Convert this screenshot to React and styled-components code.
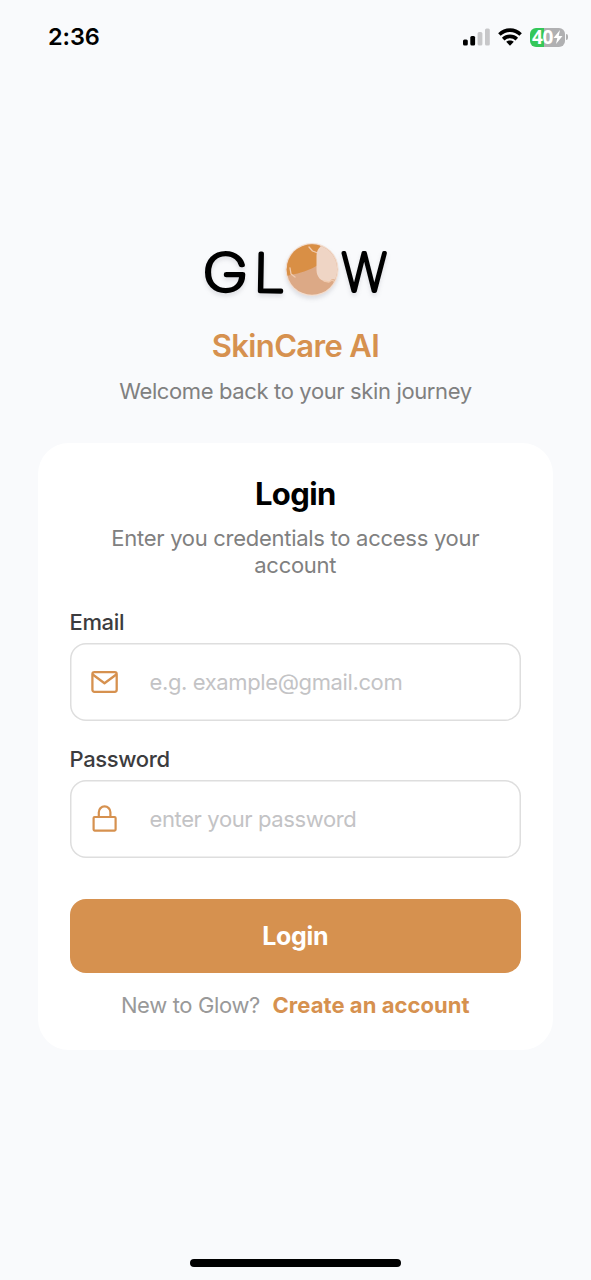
import React from "react";
import styled, { createGlobalStyle } from "styled-components";

const ACCENT = "#d6914f";

const GlobalStyle = createGlobalStyle`
  *, *::before, *::after { box-sizing: border-box; }
  body {
    margin: 0;
    background: #f9fafc;
    font-family: Inter, "Liberation Sans", sans-serif;
    -webkit-font-smoothing: antialiased;
  }
`;

const Screen = styled.div`
  width: 591px;
  height: 1280px;
  display: flex;
  flex-direction: column;
  align-items: center;
  background: #f9fafc;
  overflow: hidden;
`;

const StatusBar = styled.header`
  width: 100%;
  height: 74px;
  padding: 0 23px 0 48px;
  display: flex;
  align-items: center;
  justify-content: space-between;
`;

const Time = styled.span`
  font-size: 23.5px;
  font-weight: 600;
  line-height: 28px;
  letter-spacing: -0.1px;
  color: #000;
`;

const StatusIcons = styled.div`
  display: flex;
  align-items: center;
  gap: 8px;
`;

const Battery = styled.div`
  display: flex;
  align-items: center;
  gap: 1px;
`;

const BatteryBody = styled.div`
  width: 35px;
  height: 19px;
  border-radius: 6px;
  display: flex;
  align-items: center;
  justify-content: center;
  background: linear-gradient(90deg, #34c759 0 14px, #b0b0b2 14px);
  color: #fff;
  font-family: "Open Sans", Inter, sans-serif;
  font-size: 19px;
  font-weight: 700;
  line-height: 19px;
  letter-spacing: -0.3px;
`;

const BatteryTip = styled.div`
  width: 2px;
  height: 6px;
  border-radius: 0 2px 2px 0;
  background: #b0b0b2;
`;

const Brand = styled.section`
  margin-top: 162px;
  display: flex;
  flex-direction: column;
  align-items: center;
`;

const BrandName = styled.h1`
  margin: 17px 0 0;
  font-size: 31px;
  font-weight: 600;
  line-height: 38px;
  letter-spacing: -0.65px;
  color: ${ACCENT};
`;

const Tagline = styled.p`
  margin: 13px 0 0;
  font-size: 22px;
  line-height: 27px;
  letter-spacing: -0.37px;
  color: #808080;
  white-space: nowrap;
`;

const Card = styled.main`
  width: 515px;
  height: 607px;
  margin-top: 38px;
  padding: 32px 32px 0 31.5px;
  border-radius: 31px;
  background: #fff;
  display: flex;
  flex-direction: column;
`;

const CardTitle = styled.h2`
  margin: 0;
  text-align: center;
  font-size: 31px;
  font-weight: 700;
  line-height: 38px;
  letter-spacing: -0.65px;
  color: #000;
`;

const CardHint = styled.p`
  margin: 12px 0 0;
  text-align: center;
  font-size: 22px;
  line-height: 27px;
  letter-spacing: -0.28px;
  color: #808080;
`;

const Field = styled.label`
  display: flex;
  flex-direction: column;
  margin-top: ${({ $top }) => $top}px;
`;

const FieldLabel = styled.span`
  font-size: 22px;
  font-weight: 500;
  line-height: 27px;
  letter-spacing: -0.35px;
  color: #3c3c3e;
`;

const InputBox = styled.div`
  height: 78px;
  margin-top: 6.5px;
  padding: 1px 20px 0;
  display: flex;
  align-items: center;
  gap: 30px;
  border-radius: 16px;
  background: #fff;
  box-shadow: inset 0 0 0 1.5px #dedede;
`;

const Input = styled.input`
  flex: 1;
  min-width: 0;
  height: 40px;
  padding: 0;
  border: 0;
  outline: 0;
  background: transparent;
  font: 400 22px/27px Inter, "Liberation Sans", sans-serif;
  letter-spacing: -0.38px;
  color: #222;
  &::placeholder { color: #c3c3c5; opacity: 1; }
`;

const SubmitButton = styled.button`
  height: 74.5px;
  margin-top: 41px;
  padding: 0;
  border: 0;
  border-radius: 16px;
  background: ${ACCENT};
  color: #fff;
  font: 700 25px/30px Inter, "Liberation Sans", sans-serif;
  letter-spacing: -0.3px;
`;

const SignupRow = styled.div`
  margin-top: 19px;
  display: flex;
  justify-content: center;
  gap: 12.5px;
  font-size: 22px;
  line-height: 27px;
  letter-spacing: -0.35px;
  color: #999;
  white-space: nowrap;
`;

const SignupLink = styled.a`
  color: ${ACCENT};
  font-weight: 700;
  letter-spacing: 0.05px;
`;

const HomeIndicator = styled.div`
  width: 211px;
  height: 8px;
  margin: auto 0 13px;
  border-radius: 4px;
  background: #000;
`;

const Wordmark = styled.svg`
  display: block;
  filter: drop-shadow(0 3px 2px rgba(60, 60, 80, 0.14));
  text {
    font-family: Inter, sans-serif;
    font-weight: 100;
    stroke: #000;
    stroke-width: 4px;
    stroke-linejoin: round;
    stroke-linecap: round;
  }
`;

function GlowLogo() {
  return (
    <Wordmark width="190" height="74" viewBox="201 236 190 74" role="img" aria-label="Glow">
      <defs>
        <clipPath id="disc"><circle cx="312" cy="269.5" r="25.3" /></clipPath>
      </defs>
      <text transform="translate(203 291.2) scale(1.19 1)" fontSize="51">G</text>
      <text transform="translate(253.7 291.2) rotate(1) scale(1.05 1)" fontSize="52">L</text>
      <text transform="translate(341.8 291) scale(.93 1)" fontSize="52">W</text>
      <circle cx="312" cy="269.5" r="26.5" fill="#f2ddcf" />
      <g clipPath="url(#disc)">
        <rect x="285" y="242" width="55" height="55" fill="#dca986" />
        <path d="M285 242h35v21q-4 4-12 7-8 3-13 4-5 1-10 2.500z" fill="#d98f45" />
        <path d="M340 243v40l-3-3-5-1-3 3c-8 0-12.500-5-12.500-12v-14c0-6 3-10 9-12z" fill="#efd5c5" />
        <path d="M309 247l3.500 4 4 1.500M290 268l1 6 4 3M324 281l5 1 3-2 5 3" fill="none" stroke="#f0cbb0" strokeWidth="1.3" strokeLinecap="round" strokeLinejoin="round" />
      </g>
    </Wordmark>
  );
}

function SignalIcon() {
  return (
    <svg width="27" height="18" viewBox="0 0 27 18">
      <rect x="0" y="11.500" width="4.800" height="6" rx="1.500" />
      <rect x="7.300" y="8" width="4.800" height="9.500" rx="1.500" />
      <rect x="14.600" y="4" width="4.800" height="13.500" rx="1.500" fill="#c7c7c9" />
      <rect x="22" y="0.500" width="4.800" height="17" rx="1.500" fill="#c7c7c9" />
    </svg>
  );
}

function WifiIcon() {
  return (
    <svg width="24" height="18" viewBox="0 0 24 18">
      <g fill="none" stroke="#000" strokeWidth="3.6">
        <path d="M1.400 6.500C7.400.700 16.600.700 22.600 6.500" />
        <path d="M5.200 11.100C9 7.400 15 7.400 18.800 11.100" />
      </g>
      <path d="M8.200 13.800c2.200-1.900 5.400-1.900 7.600 0L12 17.700z" />
    </svg>
  );
}

function BoltIcon() {
  return (
    <svg width="10" height="14" viewBox="0 0 10 14">
      <path d="M7 0 .5 8h3.800L3 14l6.500-8H5.700z" fill="#fff" />
    </svg>
  );
}

function MailIcon() {
  return (
    <svg width="30" height="30" viewBox="0 0 30 30" fill="none" stroke={ACCENT} strokeWidth="2.3" strokeLinejoin="round">
      <rect x="2.400" y="5.200" width="24.300" height="19.600" rx="2" />
      <path d="M2.700 7.500 14.500 16.200 26.300 7.500" />
    </svg>
  );
}

function LockIcon() {
  return (
    <svg width="30" height="30" viewBox="0 0 30 30" fill="none" stroke={ACCENT} strokeWidth="2.2" strokeLinejoin="round">
      <rect x="3.600" y="13" width="22" height="13.600" rx="1" />
      <path d="M8.800 13V8.200a5.800 5.800 0 0 1 11.600 0V13" />
    </svg>
  );
}

export default function App() {
  return (
    <>
      <GlobalStyle />
      <Screen>
        <StatusBar>
          <Time>2:36</Time>
          <StatusIcons>
            <SignalIcon />
            <WifiIcon />
            <Battery>
              <BatteryBody>40<BoltIcon /></BatteryBody>
              <BatteryTip />
            </Battery>
          </StatusIcons>
        </StatusBar>
        <Brand>
          <GlowLogo />
          <BrandName>SkinCare AI</BrandName>
          <Tagline>Welcome back to your skin journey</Tagline>
        </Brand>
        <Card>
          <CardTitle>Login</CardTitle>
          <CardHint>Enter you credentials to access your<br />account</CardHint>
          <Field $top={30}>
            <FieldLabel>Email</FieldLabel>
            <InputBox>
              <MailIcon />
              <Input type="email" placeholder="e.g. example@gmail.com" />
            </InputBox>
          </Field>
          <Field $top={25.5}>
            <FieldLabel>Password</FieldLabel>
            <InputBox>
              <LockIcon />
              <Input type="password" placeholder="enter your password" />
            </InputBox>
          </Field>
          <SubmitButton>Login</SubmitButton>
          <SignupRow>
            <span>New to Glow?</span>
            <SignupLink>Create an account</SignupLink>
          </SignupRow>
        </Card>
        <HomeIndicator />
      </Screen>
    </>
  );
}
